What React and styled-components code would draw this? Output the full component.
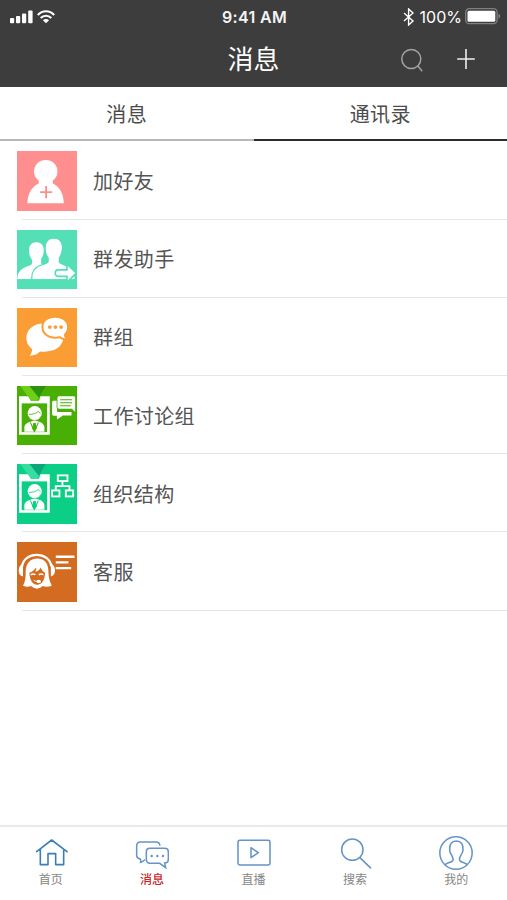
import React from 'react';
import styled, { createGlobalStyle } from 'styled-components';

const GlobalStyle = createGlobalStyle`
  * {
    box-sizing: border-box;
  }

  body {
    margin: 0;
    background: #fff;
    font-family: "Liberation Sans", "Noto Sans CJK SC", sans-serif;
  }
`;

const SignalIcon = () => (
  <svg width="24" height="16" viewBox="0 0 24 16" fill="#fff">
    <rect x="0" y="9" width="4.2" height="5.3" rx="1" />
    <rect x="6" y="7" width="4.2" height="7.3" rx="1" />
    <rect x="12" y="4.5" width="4.2" height="9.8" rx="1" />
    <rect x="18.2" y="1.5" width="4.4" height="12.8" rx="1" />
  </svg>
);

const WifiIcon = () => (
  <svg width="18" height="14" viewBox="0 0 18 14" fill="none" stroke="#fff" strokeWidth="2.1">
    <path d="M.8 5C5.5 0 12.5 0 17.2 5" />
    <path d="M3.7 8.1c3-3.1 7.6-3.1 10.6 0" />
    <path d="M5.9 10.2c1.8-1.7 4.4-1.7 6.2 0L9 13.2z" fill="#fff" stroke="none" />
  </svg>
);

const BluetoothIcon = () => (
  <svg width="12" height="18" viewBox="0 0 12 18" fill="none" stroke="#fff" strokeWidth="1.4">
    <path d="M1 5l9 8-4.4 4V1L10 5l-9 8" />
  </svg>
);

const BatteryIcon = () => (
  <svg width="36" height="17" viewBox="0 0 36 17">
    <rect x=".7" y=".7" width="31.4" height="15" rx="3.6" fill="none" stroke="#808080" strokeWidth="1.3" />
    <rect x="2.5" y="2.7" width="27.8" height="11" rx="1.5" fill="#fff" />
    <path d="M33.5 5.8c2.2.6 2.2 4.2 0 4.8z" fill="#808080" />
  </svg>
);

const HeaderSearchIcon = () => (
  <svg width="24" height="24" viewBox="0 0 24 24" fill="none" stroke="#a3a3a3" strokeWidth="1.5">
    <circle cx="11.3" cy="11" r="9.5" />
    <path d="M17.7 17.8l4.5 5.5" />
  </svg>
);

const PlusIcon = () => (
  <svg width="20" height="22" viewBox="0 0 20 22" stroke="#eee" strokeWidth="1.6">
    <path d="M1.2 10h17.6M10 0v20" />
  </svg>
);

const AddFriendIcon = () => (
  <g>
    <ellipse cx="86" cy="61" rx="35" ry="34" fill="#fff" />
    <path d="M65 82h42v15c19 8 32 29 33 59H31c1-30 15-51 34-59z" fill="#fff" />
    <path d="M69 123h36M87 105v36" stroke="#ff8f8f" strokeWidth="5.5" />
  </g>
);

const BroadcastIcon = () => (
  <g>
    <path
      d="M58 37c15 0 23 11 22 26-1 15-6 19-8 25v12l26 13v34H1c0-19 10-31 29-38 9-3 14-5 15-9V89c-5-7-9-15-9-28 0-15 8-24 22-24z"
      fill="#fff"
    />
    <path
      d="M110 26c16 0 25 11 24 28-1 15-5 23-9 29v14c7 8 31 13 38 19 6 5 9 17 9 31H46c0-21 7-33 25-39 13-5 22-8 24-12V83c-6-8-9-17-9-30 0-17 9-27 24-27z"
      fill="#fff"
      stroke="#54dfb7"
      strokeWidth="8"
      paintOrder="stroke"
    />
    <path d="M0 147h178v31H0z" fill="#54dfb7" />
    <path
      d="M152 108l22 21-22 21v-14h-29c-8 0-8-14 0-14h29z"
      fill="#fff"
      stroke="#54dfb7"
      strokeWidth="10"
      paintOrder="stroke"
    />
  </g>
);

const GroupChatIcon = () => (
  <g>
    <path
      d="M81 46c-33 0-53 19-53 43 0 14 7 26 17 34 1 8-3 14-7 20 15-1 25-6 31-13 42 4 68-12 70-43-3-22-25-41-58-41z"
      fill="#fff"
    />
    <path
      d="M114 29c-21 0-35 11-35 27 0 18 15 30 37 30 5 0 9-1 13-2 4 4 9 6 15 7-3-4-4-8-3-13 6-5 9-13 9-21 0-17-15-28-36-28z"
      fill="#fff"
      stroke="#fb9d35"
      strokeWidth="12"
      paintOrder="stroke"
    />
    <g fill="#fb9d35">
      <circle cx="98" cy="57" r="5.5" />
      <circle cx="115" cy="57" r="5.5" />
      <circle cx="132" cy="57" r="5.5" />
    </g>
  </g>
);

// Shared by the work group and the organisation rows
const Badge = ({ color, strap, strapDark }) => (
  <g>
    <path d="M6 31h92v115H6z" fill="#fff" />
    <path d="M35 28h36l-5 16H41z" fill={color} />
    <path d="M37 0h49L65 36 52 25z" fill={strapDark} />
    <path d="M10 0h27l29 36-6 7H41z" fill={strap} />
    <rect x="14" y="52" width="76" height="86" fill={color} />
    <path d="M22 137v-14c1-9 9-13 18-16l9-3v-5h8v5l9 3c9 3 15 7 16 16v14z" fill="#fff" />
    <ellipse cx="53" cy="82" rx="21" ry="22" fill="#fff" />
    <path d="M36 85c12 0 22-3 28-9 2 3 4 5 6 7" fill="none" stroke={color} strokeWidth="2.5" />
    <path d="M34 91c3 7 9 12 19 12s15-5 18-12" fill="none" stroke={color} strokeWidth="2" />
    <path d="M40 109l12 27 12-27" fill="none" stroke={color} strokeWidth="3" />
    <path d="M49 111h7l3 16-7 10-7-10z" fill={color} />
  </g>
);

const WorkGroupIcon = () => (
  <g>
    <Badge color="#48b005" strap="#6fcf16" strapDark="#2d930a" />
    <path
      d="M110 44h10v34h43v10h-26l-17 12-1-11h-9c-3 0-5-2-5-5V49c0-3 2-5 5-5z"
      fill="#fff"
    />
    <path
      d="M126 31h43c3 0 5 2 5 5v41l-10-9h-38c-3 0-5-2-5-5V36c0-3 2-5 5-5z"
      fill="#fff"
      stroke="#48b005"
      strokeWidth="5"
      paintOrder="stroke"
    />
    <path d="M129 41h36M129 50h36M129 59h32" stroke="#48b005" strokeWidth="3" />
  </g>
);

const OrganisationIcon = () => (
  <g>
    <Badge color="#0bcf87" strap="#36dea2" strapDark="#0aa878" />
    <g fill="none" stroke="#fff" strokeWidth="5.5">
      <rect x="122" y="34" width="29" height="17" />
      <rect x="105" y="79" width="22" height="18" />
      <rect x="146" y="79" width="22" height="18" />
      <path d="M136 52v14M116 79V66h41v13" />
    </g>
  </g>
);

const ServiceIcon = () => (
  <g>
    <path d="M15 74C20 27 98 27 103 74" fill="none" stroke="#fff" strokeWidth="7" />
    <path
      d="M60 49c25 0 34 17 34 39 0 17 4 30 10 43-9 4-20 4-27 1-11 10-24 10-35 0-8 3-16 3-24-1 7-14 8-26 8-43 0-23 13-39 34-39z"
      fill="#fff"
    />
    <path
      d="M37 92c8-3 15-8 20-16 1 4 0 9-2 13 8-2 13-7 16-13 3 8 7 13 13 16-1 20-8 36-24 36-14 0-22-16-23-36z"
      fill="#d36b20"
    />
    <path d="M41 98c5-3 10-3 14 0M65 98c5-3 10-3 14 0" fill="none" stroke="#fff" strokeWidth="4.5" />
    <path d="M50 115c6 3 11 3 16 0" fill="none" stroke="#fff" strokeWidth="2.5" />
    <ellipse cx="65" cy="118" rx="6.5" ry="5" fill="#fff" />
    <path d="M18 65v38C1 102 1 69 18 65zM101 65v38c17-1 17-34 0-38z" fill="#fff" />
    <path d="M21 72v31M98 72v31" stroke="#d36b20" strokeWidth="3.5" />
    <path d="M116 44h56M116 61h38M116 78h46" stroke="#fff" strokeWidth="7" />
  </g>
);

const HomeIcon = () => (
  <path
    d="M8 47L53 12l46 35M19 39v47h23V53h23v33h24V39"
    stroke="#3b7fb9"
    strokeWidth="4.8"
    strokeLinecap="round"
    strokeLinejoin="round"
  />
);

const ChatIcon = () => (
  <g>
    <path d="M75 29c-1-7-5-11-12-11H16C9 18 5 23 5 30v28c0 6 4 10 11 11 1 3 2 6 1 10 6-2 9-5 13-8" />
    <path d="M45 37h44c7 0 11 4 11 11v22c0 7-4 11-11 11l3 14-18-13H45c-7 0-11-5-11-12V48c0-7 4-11 11-11z" />
    <g fill="#6594c6" stroke="none">
      <circle cx="50" cy="60" r="3.6" />
      <circle cx="67" cy="60" r="3.6" />
      <circle cx="84" cy="60" r="3.6" />
    </g>
  </g>
);

const LiveIcon = () => (
  <g>
    <rect x="3" y="13" width="96" height="74" rx="6" />
    <path d="M42 35l22 15-22 15z" strokeLinejoin="round" />
  </g>
);

const SearchIcon = () => (
  <g>
    <circle cx="43" cy="41" r="32" />
    <path d="M65 64l34 33" />
  </g>
);

const ProfileIcon = () => (
  <g>
    <circle cx="51" cy="51" r="48.5" />
    <path d="M18 87c5-8 21-7 24-14 2-5-1-10-4-15-3-4-6-8-6-16-1-18 6-27 20-27s21 9 20 27c0 8-4 12-7 17-3 4-5 9-3 14 3 7 18 6 23 14" />
  </g>
);

const CONTACTS = [
  { label: '加好友', color: '#ff8f8f', icon: <AddFriendIcon /> },
  { label: '群发助手', color: '#54dfb7', icon: <BroadcastIcon /> },
  { label: '群组', color: '#fb9d35', icon: <GroupChatIcon /> },
  { label: '工作讨论组', color: '#48b005', icon: <WorkGroupIcon /> },
  { label: '组织结构', color: '#0bcf87', icon: <OrganisationIcon /> },
  { label: '客服', color: '#d36b20', icon: <ServiceIcon /> },
];

const NAV_ITEMS = [
  { label: '首页', icon: <HomeIcon /> },
  { label: '消息', icon: <ChatIcon />, active: true },
  { label: '直播', icon: <LiveIcon /> },
  { label: '搜索', icon: <SearchIcon /> },
  { label: '我的', icon: <ProfileIcon /> },
];

const App = () => (
  <React.Fragment>
    <GlobalStyle />
    <Screen>
      <Header>
        <StatusBar>
          <StatusLeft>
            <SignalIcon />
            <WifiIcon />
          </StatusLeft>
          <Clock>9:41 AM</Clock>
          <StatusRight>
            <BluetoothIcon />
            <BatteryLevel>100%</BatteryLevel>
            <BatteryIcon />
          </StatusRight>
        </StatusBar>
        <TitleBar>
          <Title>消息</Title>
          <Actions>
            <HeaderSearchIcon />
            <PlusIcon />
          </Actions>
        </TitleBar>
      </Header>
      <Tabs>
        <Tab>消息</Tab>
        <Tab $active>通讯录</Tab>
      </Tabs>
      <List>
        {CONTACTS.map(({ label, color, icon }) => (
          <Row key={label}>
            <Tile viewBox="0 0 178 178" $color={color}>
              {icon}
            </Tile>
            <RowLabel>{label}</RowLabel>
          </Row>
        ))}
      </List>
      <BottomNav>
        {NAV_ITEMS.map(({ label, icon, active }) => (
          <NavItem key={label}>
            <NavIcon viewBox="0 0 102 102">{icon}</NavIcon>
            <NavLabel $active={active}>{label}</NavLabel>
          </NavItem>
        ))}
      </BottomNav>
    </Screen>
  </React.Fragment>
);

export default App;

const Screen = styled.div`
  display: flex;
  flex-direction: column;
  width: 100%;
  height: 900px;
  overflow: hidden;
  background: #fff;
`;

const Header = styled.header`
  flex: none;
  height: 87px;
  background: #3d3d3d;
  color: #fff;
`;

const StatusBar = styled.div`
  display: grid;
  grid-template-columns: 1fr auto 1fr;
  align-items: center;
  height: 33px;
  padding: 0 6px 0 10px;
  font-family: Inter, "Liberation Sans", sans-serif;
  line-height: 20px;
`;

const StatusLeft = styled.div`
  display: flex;
  align-items: center;
  gap: 3px;
`;

const Clock = styled.span`
  margin-right: 2px;
  color: #f4f4f4;
  font-size: 16px;
  font-weight: 600;
  letter-spacing: 0.35px;
`;

const StatusRight = styled.div`
  display: flex;
  align-items: center;
  justify-content: flex-end;
`;

const BatteryLevel = styled.span`
  margin: 0 3px 0 5px;
  font-size: 16px;
`;

const TitleBar = styled.div`
  display: grid;
  grid-template-columns: 1fr auto 1fr;
  align-items: center;
  height: 54px;
`;

const Title = styled.h1`
  grid-column: 2;
  margin: 0;
  padding-bottom: 1px;
  font-size: 26px;
  font-weight: 400;
  line-height: 40px;
`;

const Actions = styled.div`
  display: flex;
  align-items: center;
  justify-content: flex-end;
  gap: 32px;
  padding-right: 31px;
`;

const Tabs = styled.div`
  display: flex;
  flex: none;
  height: 54px;
`;

const Tab = styled.div`
  flex: 1;
  border-bottom: 2px solid ${props => (props.$active ? '#2b2b2b' : '#b8b8b8')};
  color: #4c4c4c;
  font-size: 20px;
  letter-spacing: 0.4px;
  line-height: 57px;
  text-align: center;
`;

const List = styled.div`
  flex: 1;
  padding-top: 0.5px;
`;

const Row = styled.div`
  display: flex;
  align-items: center;
  height: 78.2px;
  padding-left: 17px;
  background: linear-gradient(#e6e6e6, #e6e6e6) 22px 100% / 100% 1px no-repeat;
`;

const Tile = styled.svg`
  flex: none;
  width: 59.5px;
  height: 59.5px;
  margin-top: 1px;
  background: ${props => props.$color};
`;

const RowLabel = styled.span`
  margin-left: 16.5px;
  padding-top: 3px;
  color: #555;
  font-size: 20px;
  letter-spacing: 0.4px;
  line-height: 30px;
`;

const BottomNav = styled.nav`
  display: flex;
  flex: none;
  height: 75px;
  border-top: 2px solid #e9e9e9;
`;

const NavItem = styled.div`
  display: flex;
  flex: 1;
  flex-direction: column;
  align-items: center;
  padding-top: 8.5px;
`;

const NavIcon = styled.svg`
  width: 34px;
  height: 34px;
  fill: none;
  stroke: #6594c6;
  stroke-width: 4.6;
`;

const NavLabel = styled.span`
  padding-top: 1px;
  color: ${props => (props.$active ? '#c9282d' : '#858585')};
  font-size: 12px;
  font-weight: ${props => (props.$active ? 500 : 400)};
  line-height: 19px;
`;
